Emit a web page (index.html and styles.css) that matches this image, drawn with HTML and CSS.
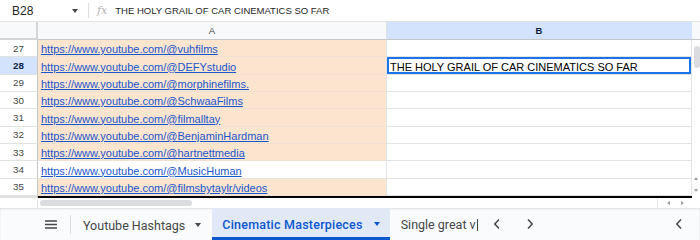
FILE: index.html
```html
<!DOCTYPE html>
<html lang="en">
<head>
  <meta charset="UTF-8">
  <title>Cinematic Masterpieces</title>
  <link rel="stylesheet" href="styles.css">
</head>
<body>

<div id="app">
  <!-- Formula bar -->
  <div id="formula-bar">
    <div class="name-box">B28<span class="caret"></span></div>
    <div class="fx">fx</div>
    <div class="formula-text">THE HOLY GRAIL OF CAR CINEMATICS SO FAR</div>
  </div>

  <!-- Grid -->
  <div id="sheet">
    <div id="grid">
      <div class="corner"></div>
      <div class="col-head">A</div>
      <div class="col-head selected">B</div>

      <div class="row-head">27</div>
      <div class="cell a"><a>https://www.youtube.com/@vuhfilms</a></div>
      <div class="cell"></div>

      <div class="row-head selected">28</div>
      <div class="cell a"><a>https://www.youtube.com/@DEFYstudio</a></div>
      <div class="cell active">THE HOLY GRAIL OF CAR CINEMATICS SO FAR</div>

      <div class="row-head">29</div>
      <div class="cell a"><a>https://www.youtube.com/@morphinefilms.</a></div>
      <div class="cell"></div>

      <div class="row-head">30</div>
      <div class="cell a"><a>https://www.youtube.com/@SchwaaFilms</a></div>
      <div class="cell"></div>

      <div class="row-head">31</div>
      <div class="cell a"><a>https://www.youtube.com/@filmalltay</a></div>
      <div class="cell"></div>

      <div class="row-head">32</div>
      <div class="cell a"><a>https://www.youtube.com/@BenjaminHardman</a></div>
      <div class="cell"></div>

      <div class="row-head">33</div>
      <div class="cell a"><a>https://www.youtube.com/@hartnettmedia</a></div>
      <div class="cell"></div>

      <div class="row-head">34</div>
      <div class="cell"><a>https://www.youtube.com/@MusicHuman</a></div>
      <div class="cell"></div>

      <div class="row-head">35</div>
      <div class="cell a"><a>https://www.youtube.com/@filmsbytaylr/videos</a></div>
      <div class="cell"></div>

      <div class="edge-head"></div>
      <div class="edge-line"></div>
    </div>

    <div id="vscroll">
      <div class="vscroll-head"></div>
      <div class="vscroll-thumb"></div>
      <div class="vscroll-arrows">
        <span class="tri up"></span>
        <span class="tri down"></span>
      </div>
    </div>
  </div>

  <!-- Horizontal scrollbar -->
  <div id="hscroll">
    <div class="hscroll-head"></div>
    <div class="hscroll-track"><div class="hscroll-thumb"></div></div>
    <div class="hscroll-arrows">
      <span class="tri left"></span>
      <span class="tri right"></span>
    </div>
  </div>

  <!-- Sheet tabs -->
  <div id="tabs">
    <div class="tab-menu">
      <svg width="12" height="9" viewBox="0 0 12 9"><path d="M0 1h12M0 4.5h12M0 8h12" stroke="#444746" stroke-width="1.4"/></svg>
    </div>
    <div class="tab">Youtube Hashtags<span class="tab-caret"></span></div>
    <div class="tab current">Cinematic Masterpieces<span class="tab-caret"></span></div>
    <div class="tab clipped"><span class="clip-text">Single great v</span></div>
    <div class="tab-nav">
      <svg width="8" height="12" viewBox="0 0 8 12"><path d="M6 1.5L1.8 6L6 10.5" fill="none" stroke="#444746" stroke-width="1.5"/></svg>
      <svg width="8" height="12" viewBox="0 0 8 12"><path d="M2 1.5L6.2 6L2 10.5" fill="none" stroke="#444746" stroke-width="1.5"/></svg>
    </div>
    <div class="tab-collapse">
      <svg width="8" height="12" viewBox="0 0 8 12"><path d="M6 1.5L1.8 6L6 10.5" fill="none" stroke="#444746" stroke-width="1.5"/></svg>
    </div>
  </div>
</div>

</body>
</html>
```

FILE: styles.css
```css
* {
  box-sizing: border-box;
}

body {
  margin: 0;
  font-family: "Liberation Sans", Arial, sans-serif;
  background-color: #ffffff;
}

#app {
  width: 700px;
  height: 240px;
  display: flex;
  flex-direction: column;
  overflow: hidden;
}

/* Formula bar */
#formula-bar {
  height: 22px;
  display: flex;
  align-items: center;
  border-bottom: 1px solid #e1e3e1;
}

.name-box {
  width: 89px;
  height: 15px;
  display: flex;
  align-items: center;
  justify-content: space-between;
  padding: 0 10px 0 12px;
  font-size: 12px;
  color: #1f1f1f;
  border-right: 1px solid #dadce0;
}

.caret {
  width: 0;
  height: 0;
  border-left: 3px solid transparent;
  border-right: 3px solid transparent;
  border-top: 4px solid #444746;
}

.fx {
  font-family: "DejaVu Serif", serif;
  font-style: italic;
  font-size: 11px;
  color: #b0b0b0;
  margin: 0 8px 0 8px;
}

.formula-text {
  font-size: 9.5px;
  color: #1f1f1f;
}

/* Grid */
#sheet {
  height: 176px;
  display: flex;
}

#grid {
  flex: 1;
  display: grid;
  grid-template-columns: 38px 349px 1fr;
  grid-template-rows: 18px repeat(9, 17.33px) 2px;
}

.corner {
  background-color: #f8f9fa;
  border-right: 2px solid #d3d5d8;
  border-bottom: 2px solid #d3d5d8;
}

.col-head {
  background-color: #f8f9fa;
  border-right: 1px solid #e1e3e1;
  border-bottom: 1px solid #c4c7c5;
  display: flex;
  align-items: center;
  justify-content: center;
  font-size: 9.5px;
  color: #444746;
}

.col-head.selected {
  background-color: #d3e3fd;
  color: #0b1d44;
  font-weight: bold;
  border-right-color: #d3e3fd;
}

.row-head {
  border-right: 1px solid #c4c7c5;
  border-bottom: 1px solid #e1e3e1;
  display: flex;
  align-items: center;
  justify-content: center;
  font-size: 9.8px;
  color: #444746;
}

.row-head.selected {
  background-color: #d3e3fd;
  color: #0b1d44;
  font-weight: bold;
}

.cell {
  border-right: 1px solid #e2e3e3;
  border-bottom: 1px solid #e2e3e3;
  display: flex;
  align-items: flex-end;
  padding: 0 3px 1px;
  font-size: 11px;
  color: #000000;
  white-space: nowrap;
  overflow: hidden;
}

.cell.a {
  background-color: #fbe5cf;
  border-bottom-color: #efe0d2;
}

.cell a {
  color: #1a55cc;
  text-decoration: underline;
}

.cell.active {
  box-shadow: inset 0 0 0 2px #1a73e8;
  padding-left: 3px;
}

.edge-head {
  background-color: #e1e3e1;
  border-right: 1px solid #c4c7c5;
}

.edge-line {
  grid-column: 2 / 4;
  background-color: #000000;
}

/* Vertical scrollbar */
#vscroll {
  width: 8px;
  display: flex;
  flex-direction: column;
  align-items: flex-end;
}

.vscroll-head {
  width: 100%;
  height: 18px;
  background-color: #f8f9fa;
  border-bottom: 1px solid #c4c7c5;
}

.vscroll-thumb {
  width: 6px;
  height: 22px;
  margin-top: 6px;
  background-color: #dadce0;
  border-radius: 3px;
}

.vscroll-arrows {
  margin-top: auto;
  width: 100%;
  display: flex;
  flex-direction: column;
  align-items: center;
  gap: 9px;
  padding-bottom: 6px;
}

.tri {
  width: 0;
  height: 0;
  border: 2px solid transparent;
}

.tri.up {
  border-bottom: 3px solid #9aa0a6;
  border-top-width: 0;
}

.tri.down {
  border-top: 3px solid #9aa0a6;
  border-bottom-width: 0;
}

.tri.left {
  border-right: 3px solid #9aa0a6;
  border-left-width: 0;
}

.tri.right {
  border-left: 3px solid #9aa0a6;
  border-right-width: 0;
}

/* Horizontal scrollbar */
#hscroll {
  height: 10px;
  display: flex;
  align-items: stretch;
}

.hscroll-head {
  width: 38px;
  border-right: 1px solid #e1e3e1;
}

.hscroll-track {
  flex: 1;
  padding: 2px 0 2px 2px;
}

.hscroll-thumb {
  width: 152px;
  height: 6px;
  background-color: #dadce0;
  border-radius: 3px;
}

.hscroll-arrows {
  width: 35px;
  display: flex;
  align-items: center;
  justify-content: space-around;
  border-left: 1px solid #e8eaed;
  margin-right: 8px;
  padding: 0 3px;
}

/* Sheet tabs */
#tabs {
  height: 32px;
  display: flex;
  align-items: stretch;
  background-color: #f9fbfd;
  box-shadow: inset 0 1px 2px rgba(0, 0, 0, 0.12);
  font-family: Roboto, "Liberation Sans", sans-serif;
  font-size: 12.5px;
  color: #444746;
}

.tab-menu {
  width: 71px;
  display: flex;
  align-items: center;
  padding-left: 45px;
  position: relative;
}

.tab-menu::after {
  content: "";
  position: absolute;
  right: 0;
  top: 7px;
  height: 19px;
  border-right: 1px solid #dadce0;
}

.tab {
  display: flex;
  align-items: center;
  gap: 10px;
  padding: 2px 11px 0 12px;
  white-space: nowrap;
}

.tab.current {
  background-color: #e1e9f7;
  color: #0b57d0;
  font-weight: 500;
  letter-spacing: 0.22px;
  padding: 3px 10px 0 10px;
  gap: 11px;
  border-bottom: 3px solid #0b57d0;
}

.tab-caret {
  width: 0;
  height: 0;
  border-left: 3.5px solid transparent;
  border-right: 3.5px solid transparent;
  border-top: 4px solid currentColor;
}

.tab.clipped {
  padding-left: 11px;
  padding-right: 0;
}

.clip-text {
  display: block;
  padding-right: 1px;
  border-right: 1px solid #444746;
  line-height: 12px;
}

.tab-nav {
  display: flex;
  align-items: center;
  gap: 25px;
  padding-left: 15px;
}

.tab-collapse {
  margin-left: auto;
  display: flex;
  align-items: center;
  padding-right: 17px;
}
```
